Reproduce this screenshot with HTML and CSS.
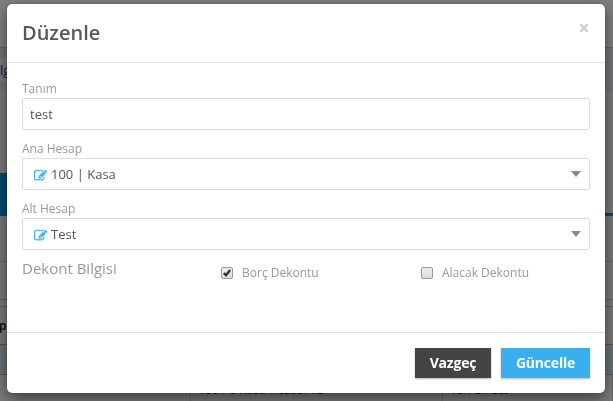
FILE: index.html
```html
<!DOCTYPE html>
<html lang="tr">

<head>
    <meta charset="UTF-8">
    <meta name="viewport" content="width=device-width, initial-scale=1.0">
    <title>Düzenle</title>
    <link rel="stylesheet" href="styles.css">
</head>

<body>

    <div class="page">
        <div class="topbar"></div>
        <div class="breadcrumb-bar">
            <div class="breadcrumb"><a href="#">lg</a></div>
        </div>
        <div class="page-head"></div>
        <div class="tabs">
            <div class="tab"></div>
        </div>
        <div class="toolbar"></div>
        <div class="filters"></div>
        <div class="spacer"></div>
        <div class="table-head">p</div>
        <div class="table-row selected"></div>
        <div class="table-row">
            <span class="cell"></span>
            <span class="cell">100 / 0 Kasa Hesabı TL</span>
            <span class="cell">Yarı Direct</span>
        </div>
    </div>

    <div class="backdrop"></div>

    <div class="modal">
        <div class="modal-header">
            <h4>Düzenle</h4>
            <button type="button" class="close" aria-label="Kapat">
                <svg viewBox="0 0 10 10"><path d="M1.2 1.2l7.6 7.6M8.8 1.2l-7.6 7.6"/></svg>
            </button>
        </div>

        <form class="modal-body">
            <label for="tanim">Tanım</label>
            <input type="text" class="field" id="tanim" value="test">

            <label>Ana Hesap</label>
            <div class="field select">
                <svg class="edit" viewBox="0 0 1792 1792"><path d="M888 1184l116-116-152-152-116 116v56h96v96h56zm440-720q-16-16-33 1l-350 350q-17 17-1 33t33-1l350-350q17-17 1-33zm80 594v190q0 119-84.5 203.5t-203.5 84.5h-832q-119 0-203.5-84.5t-84.5-203.5v-832q0-119 84.5-203.5t203.5-84.5h832q63 0 117 25 15 7 18 23 3 17-9 29l-49 49q-14 14-32 8-23-6-45-6h-832q-66 0-113 47t-47 113v832q0 66 47 113t113 47h832q66 0 113-47t47-113v-126q0-13 9-22l64-64q15-15 35-7t20 29zm-96-738l288 288-672 672h-288v-288zm444 132l-92 92-288-288 92-92q28-28 68-28t68 28l152 152q28 28 28 68t-28 68z"/></svg>
                <span>100 | Kasa</span>
                <i class="caret"></i>
            </div>

            <label>Alt Hesap</label>
            <div class="field select">
                <svg class="edit" viewBox="0 0 1792 1792"><path d="M888 1184l116-116-152-152-116 116v56h96v96h56zm440-720q-16-16-33 1l-350 350q-17 17-1 33t33-1l350-350q17-17 1-33zm80 594v190q0 119-84.5 203.5t-203.5 84.5h-832q-119 0-203.5-84.5t-84.5-203.5v-832q0-119 84.5-203.5t203.5-84.5h832q63 0 117 25 15 7 18 23 3 17-9 29l-49 49q-14 14-32 8-23-6-45-6h-832q-66 0-113 47t-47 113v832q0 66 47 113t113 47h832q66 0 113-47t47-113v-126q0-13 9-22l64-64q15-15 35-7t20 29zm-96-738l288 288-672 672h-288v-288zm444 132l-92 92-288-288 92-92q28-28 68-28t68 28l152 152q28 28 28 68t-28 68z"/></svg>
                <span>Test</span>
                <i class="caret"></i>
            </div>

            <div class="options">
                <span class="options-title">Dekont Bilgisi</span>
                <label class="check">
                    <input type="checkbox" checked>
                    <span class="box"><svg viewBox="0 0 12 12"><path d="M2.2 6.2l2.6 2.5 5-6.2"/></svg></span>
                    <span>Borç Dekontu</span>
                </label>
                <label class="check">
                    <input type="checkbox">
                    <span class="box"><svg viewBox="0 0 12 12"><path d="M2.2 6.2l2.6 2.5 5-6.2"/></svg></span>
                    <span>Alacak Dekontu</span>
                </label>
            </div>
        </form>

        <div class="modal-footer">
            <button type="button" class="btn cancel">Vazgeç</button>
            <button type="button" class="btn update">Güncelle</button>
        </div>
    </div>

</body>

</html>
```
FILE: styles.css
```css
* {
    box-sizing: border-box;
}

body {
    margin: 0;
    height: 401px;
    overflow: hidden;
    font-family: "Open Sans", sans-serif;
    font-size: 13px;
    color: #58595b;
}

/* Page behind the modal */
.page {
    height: 401px;
    overflow: hidden;
    background-color: #f5f5f5;
}

.topbar {
    height: 48px;
    background-color: #fff;
    border-bottom: 1px solid #c8c8c8;
}

.breadcrumb-bar {
    height: 44px;
    padding: 10px 0;
    background-color: #e4e9ee;
}

.breadcrumb {
    width: 300px;
    height: 24px;
    line-height: 24px;
    background-color: #f5f5f5;
}

.breadcrumb a {
    color: #5a20a0;
    text-decoration: none;
}

.page-head {
    height: 81px;
}

.tabs {
    height: 43px;
    border-bottom: 3px solid #0095d9;
}

.tab {
    width: 150px;
    height: 40px;
    background-color: #0095d9;
}

.toolbar {
    height: 46px;
    border-bottom: 1px solid #ccc;
}

.filters {
    height: 38px;
    border-bottom: 1px solid #c4c4c4;
}

.spacer {
    height: 7px;
    border-bottom: 1px solid #c4c4c4;
}

.table-head {
    height: 38px;
    line-height: 38px;
    font-weight: 600;
    font-size: 12px;
    text-indent: -1px;
    color: #222;
    border-bottom: 1px solid #aaa;
}

.table-row {
    display: grid;
    grid-template-columns: 191px 252px 1fr;
    height: 38px;
    font-size: 12px;
    color: #222;
}

.table-row.selected {
    height: 30px;
    background-color: #d5e2ea;
    border-bottom: 1px solid #aaa;
}

.cell {
    padding: 6px 7px 0;
    border-right: 1px solid #ccc;
}

.backdrop {
    position: fixed;
    inset: 0;
    background-color: rgba(0, 0, 0, 0.5);
}

/* Modal */
.modal {
    position: absolute;
    top: 4px;
    left: 7px;
    display: flex;
    flex-direction: column;
    width: 598px;
    height: 389px;
    background-color: #fff;
    border-radius: 5px;
    box-shadow: 0 0 1px rgba(0, 0, 0, 0.7), 0 5px 15px rgba(0, 0, 0, 0.5);
}

.modal-header {
    display: flex;
    justify-content: space-between;
    height: 59px;
    padding: 14px 15px;
    border-bottom: 1px solid #e2e2e2;
}

.modal-header h4 {
    margin: 0;
    font-size: 20px;
    font-weight: 600;
    line-height: 30px;
}

.close {
    width: 11px;
    height: 20px;
    padding: 0;
    border: none;
    background: none;
    cursor: pointer;
}

.close svg {
    display: block;
    width: 10px;
    height: 10px;
    fill: none;
    stroke: #ccc;
    stroke-width: 2.2;
}

.modal-body {
    flex: 1;
    padding: 17px 15px 0;
}

.modal-body label {
    display: block;
    height: 18px;
    font-size: 12px;
    line-height: 18px;
    color: #999;
}

.field {
    display: block;
    width: 100%;
    height: 32px;
    margin-bottom: 10px;
    padding: 0 7px;
    border: 1px solid #ddd;
    border-radius: 2px;
    background-color: #fff;
    font-family: inherit;
    font-size: 13px;
    color: #58544f;
}

.select {
    display: flex;
    align-items: center;
    padding: 0 8px 0 11px;
}

.edit {
    width: 13px;
    height: 13px;
    margin-right: 4px;
    margin-top: 3px;
    fill: #35b0ec;
    stroke: #35b0ec;
    stroke-width: 40;
}

.caret {
    margin-left: auto;
    margin-top: -1px;
    border: 5px solid transparent;
    border-top: 6px solid #888;
    border-bottom: 0;
}

.options {
    display: grid;
    grid-template-columns: 199px 200px 1fr;
    align-items: start;
}

.options-title {
    font-size: 15px;
    line-height: 16px;
    color: #999;
}

.modal-body .check {
    display: flex;
    align-items: center;
    margin-top: 4px;
}

.check input {
    display: none;
}

.box {
    width: 12px;
    height: 12px;
    margin-right: 9px;
    border: 1px solid #999;
    border-radius: 2px;
    background: linear-gradient(#eee, #dcdcdc);
}

.box svg {
    display: none;
    width: 10px;
    height: 10px;
    fill: none;
    stroke: #333;
    stroke-width: 2.8;
}

.check input:checked + .box svg {
    display: block;
}

.modal-footer {
    display: flex;
    justify-content: flex-end;
    gap: 10px;
    height: 61px;
    padding: 15px;
    border-top: 1px solid #e2e2e2;
}

.btn {
    height: 30px;
    padding: 0 0 2px;
    border: none;
    font-family: inherit;
    font-size: 14px;
    font-weight: 700;
    letter-spacing: -0.2px;
    color: #fff;
    box-shadow: 0 1px 2px rgba(0, 0, 0, 0.3);
    cursor: pointer;
}

.cancel {
    width: 76px;
    background-color: #444;
}

.update {
    width: 89px;
    background-color: #39b0ed;
}
```
